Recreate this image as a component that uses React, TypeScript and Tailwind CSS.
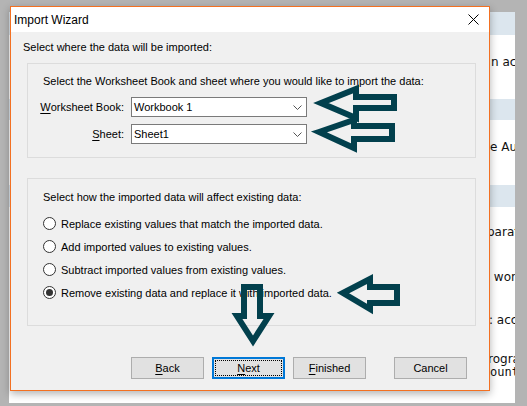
import React from "react";

const Radio = ({ checked, label }: { checked?: boolean; label: string }) => (
  <div className="flex h-[23px] items-center">
    <span className="flex h-[13px] w-[13px] items-center justify-center rounded-full border border-[#333333] bg-white">
      {checked && <span className="h-[7px] w-[7px] rounded-full bg-[#333333]" />}
    </span>
    <span className="ml-[5px] whitespace-nowrap">{label}</span>
  </div>
);

const Combo = ({ value }: { value: string }) => (
  <div className="flex h-[20px] w-[176px] items-center justify-between border border-[#7a7a7a] bg-white pl-[2px] pr-[4px]">
    <span className="whitespace-nowrap">{value}</span>
    <svg width="9" height="5" viewBox="0 0 9 5" className="text-[#555555]">
      <path d="M0.5 0.5 L4.5 4.5 L8.5 0.5" fill="none" stroke="currentColor" strokeWidth="1" />
    </svg>
  </div>
);

const Btn = ({ first, rest, focused }: { first?: string; rest: string; focused?: boolean }) =>
  focused ? (
    <div className="h-[22px] w-[73px] border-2 border-[#0078d7] bg-[#e1e1e1] p-[1px]">
      <div className="flex h-full w-full items-center justify-center border border-dotted border-black">
        <span className="underline underline-offset-2">{first}</span>
        {rest}
      </div>
    </div>
  ) : (
    <div className="flex h-[22px] w-[73px] items-center justify-center border border-[#adadad] bg-[#e1e1e1]">
      {first && <span className="underline underline-offset-2">{first}</span>}
      {rest}
    </div>
  );

// the app window sitting behind the dialog, only its right edge shows
const BackApp = () => (
  <div className="absolute left-[9px] top-[12px] flex h-[391px] w-[506px] flex-col overflow-hidden bg-white font-['DejaVu_Sans',sans-serif] text-[12px] text-[#111111]">
    <div className="h-[23px] shrink-0 bg-[#dce6ee]" />
    <div className="flex h-[64px] shrink-0 items-start pl-[482px] pt-[18px] whitespace-nowrap">n acc</div>
    <div className="h-[21px] shrink-0 bg-[#dce6ee]" />
    <div className="flex h-[65px] shrink-0 items-start pl-[481px] pt-[18px] whitespace-nowrap">e Au</div>
    <div className="h-[22px] shrink-0 bg-[#dce6ee]" />
    <div className="flex h-[45px] shrink-0 items-start pl-[478px] pt-[16px] whitespace-nowrap">parat</div>
    <div className="flex h-[43px] shrink-0 items-start pl-[477px] pt-[16px] whitespace-nowrap">: work</div>
    <div className="flex h-[40px] shrink-0 items-start pl-[480px] pt-[16px] whitespace-nowrap">: acco</div>
    <div className="flex shrink-0 flex-col pl-[479px] pt-[18px] leading-[13px] whitespace-nowrap">
      <span>rogra</span>
      <span className="pl-[2px] font-['DejaVu_Sans_Mono',monospace]">ount r</span>
    </div>
  </div>
);

const Arrows = () => (
  <svg className="pointer-events-none absolute left-0 top-0" width="527" height="406" viewBox="0 0 527 406">
    <g fill="none" stroke="#02404d" strokeWidth="6" strokeLinejoin="miter">
      <polygon points="321,103 356,89 356,97 394,97 394,108 356,108 356,118" />
      <polygon points="319,132 354,120 354,126 392,126 392,139 354,139 354,148" />
      <polygon points="343,293 370,279 370,287 397,287 397,303 370,303 370,309" />
      <polygon points="244,287 260,287 260,316 269,316 253,341 237,316 244,316" />
    </g>
  </svg>
);

export default function App() {
  return (
    <div className="relative h-[406px] w-[527px] overflow-hidden bg-[#b4b4b4] font-['Liberation_Sans',Arial,sans-serif] text-[11px] text-black">
      <BackApp />
      <div className="absolute left-[10px] top-[6px] flex h-[385px] w-[480px] flex-col border border-[#f37021] bg-[#f0f0f0] shadow-[0_3px_8px_rgba(0,0,0,0.3)]">
        <div className="flex h-[25px] shrink-0 items-center justify-between bg-white pl-[3px] pr-[10px] text-[12px]">
          <span>Import Wizard</span>
          <svg width="11" height="11" viewBox="0 0 11 11">
            <path d="M0.5 0.5 L10.5 10.5 M10.5 0.5 L0.5 10.5" stroke="#000" strokeWidth="1" />
          </svg>
        </div>
        <div className="flex flex-1 flex-col pl-[12px] pt-[8px] leading-[14px]">
          <p>Select where the data will be imported:</p>

          <div className="ml-[4px] mt-[9px] flex h-[95px] w-[449px] flex-col border border-[#dcdcdc] pl-[15px] pt-[10px]">
            <p className="whitespace-nowrap">Select the Worksheet Book and sheet where you would like to import the data:</p>
            <div className="mt-[9px] grid grid-cols-[81px_176px] items-center gap-x-[7px] gap-y-[7px]">
              <span className="flex justify-end whitespace-nowrap">
                <span className="underline underline-offset-2">W</span>orksheet Book:
              </span>
              <Combo value="Workbook 1" />
              <span className="flex justify-end whitespace-nowrap">
                <span className="underline underline-offset-2">S</span>heet:
              </span>
              <Combo value="Sheet1" />
            </div>
          </div>

          <div className="ml-[4px] mt-[20px] flex h-[148px] w-[449px] flex-col border border-[#dcdcdc] pl-[15px] pt-[11px]">
            <p>Select how the imported data will affect existing data:</p>
            <div className="mt-[8px] flex flex-col">
              <Radio label="Replace existing values that match the imported data." />
              <Radio label="Add imported values to existing values." />
              <Radio label="Subtract imported values from existing values." />
              <Radio checked label="Remove existing data and replace it with imported data." />
            </div>
          </div>

          <div className="ml-[108px] mt-[31px] flex gap-[8px]">
            <Btn first="B" rest="ack" />
            <Btn first="N" rest="ext" focused />
            <Btn first="F" rest="inished" />
            <div className="ml-[20px]">
              <Btn rest="Cancel" />
            </div>
          </div>
        </div>
      </div>
      <Arrows />
    </div>
  );
}
